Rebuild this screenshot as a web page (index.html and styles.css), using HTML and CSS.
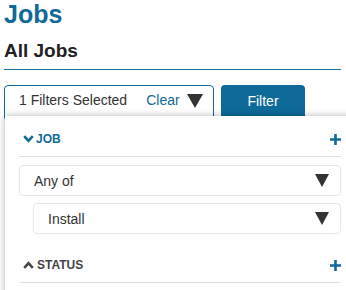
FILE: index.html
```html
<!DOCTYPE html>
<html lang="en">
<head>
    <meta charset="UTF-8">
    <meta name="viewport" content="width=device-width, initial-scale=1.0">
    <title>Jobs</title>
    <link rel="stylesheet" href="styles.css">
</head>
<body>

<div class="page">
    <h1 class="page-title">Jobs</h1>
    <h2 class="view-title">All Jobs</h2>

    <div class="filter-bar">
        <div class="filter-select">
            <span class="filter-count">1 Filters Selected</span>
            <span class="filter-clear">Clear</span>
            <svg class="caret caret-lg" viewBox="0 0 16 14"><polygon points="0,0 16,0 8,14"></polygon></svg>
        </div>
        <div class="filter-btn">Filter</div>
    </div>

    <!-- open filter dropdown, drawn over the bottom of the bar -->
    <div class="filter-panel">
        <div class="section">
            <div class="section-head">
                <svg class="chev" viewBox="0 0 11 8"><polyline points="1.2,1.2 5.5,5.8 9.8,1.2"></polyline></svg>
                <span class="section-name active">JOB</span>
                <svg class="plus" viewBox="0 0 11 11"><path d="M5.5 0V11M0 5.5H11"></path></svg>
            </div>
        </div>
        <div class="select">
            <span>Any of</span>
            <svg class="caret" viewBox="0 0 14 13"><polygon points="0,0 14,0 7,13"></polygon></svg>
        </div>
        <div class="select select-sub">
            <span>Install</span>
            <svg class="caret" viewBox="0 0 14 13"><polygon points="0,0 14,0 7,13"></polygon></svg>
        </div>
        <div class="section section-next">
            <div class="section-head">
                <svg class="chev chev-up" viewBox="0 0 11 8"><polyline points="1.2,6.8 5.5,2.2 9.8,6.8"></polyline></svg>
                <span class="section-name">STATUS</span>
                <svg class="plus" viewBox="0 0 11 11"><path d="M5.5 0V11M0 5.5H11"></path></svg>
            </div>
        </div>
    </div>
</div>

</body>
</html>
```

FILE: styles.css
```css
body {
    margin: 0;
    font-family: "Liberation Sans", Arial, sans-serif;
    color: #333;
    background: #fff;
    overflow: hidden;
}
.page {
    padding: 0 5px 0 4px;
}
.page-title {
    margin: 0;
    font-size: 25px;
    line-height: 28px;
    color: #0f6a98;
}
.view-title {
    margin: 12px 0 0;
    font-size: 19px;
    line-height: 22px;
    color: #222;
    padding-bottom: 7px;
    border-bottom: 1px solid #1a6f9e;
}
.filter-bar {
    display: flex;
    gap: 7px;
    margin-top: 15px;
}
.filter-select {
    display: flex;
    align-items: center;
    width: 210px;
    height: 36px;
    box-sizing: border-box;
    padding: 0 10px 6px 14px;
    border: 1px solid #0f6a98;
    border-radius: 4px;
    font-size: 14px;
}
.filter-clear {
    margin-left: 19px;
    color: #0f6a98;
}
.caret {
    width: 14px;
    height: 13px;
    fill: #333;
    margin-left: auto;
}
.caret-lg {
    width: 16px;
    height: 14px;
    margin-top: 2px;
}
.filter-btn {
    width: 84px;
    height: 36px;
    box-sizing: border-box;
    padding-top: 8px;
    border-radius: 4px;
    background: #0e6a98;
    color: #fff;
    font-size: 14px;
    text-align: center;
}
.filter-panel {
    position: relative;
    margin: -5px -20px 0 1px;
    height: 200px;
    padding: 13px 20px 0 14px;
    background: #fff;
    box-shadow: 0 0 7px rgba(0, 0, 0, 0.3);
}
.section {
    padding-bottom: 7px;
    border-bottom: 1px solid #e0e0e0;
}
.section-next {
    margin-top: 21px;
}
.section-head {
    display: flex;
    align-items: center;
    height: 20px;
    padding-left: 4px;
}
.chev {
    width: 11px;
    height: 8px;
    fill: none;
    stroke: #0f6a98;
    stroke-width: 2.6;
    margin-right: 2px;
}
.chev-up {
    stroke: #444;
    margin-right: 3px;
}
.section-name {
    font-size: 12px;
    font-weight: bold;
    color: #444;
}
.section-name.active {
    color: #0f6a98;
}
.plus {
    width: 11px;
    height: 11px;
    margin-left: auto;
    stroke: #0f6a98;
    stroke-width: 2.6;
}
.select {
    display: flex;
    align-items: center;
    height: 31px;
    box-sizing: border-box;
    margin-top: 8px;
    padding: 0 11px 0 14px;
    border: 1px solid #e8e8e8;
    border-radius: 4px;
    font-size: 14px;
}
.select-sub {
    margin: 7px 0 0 14px;
}
```
